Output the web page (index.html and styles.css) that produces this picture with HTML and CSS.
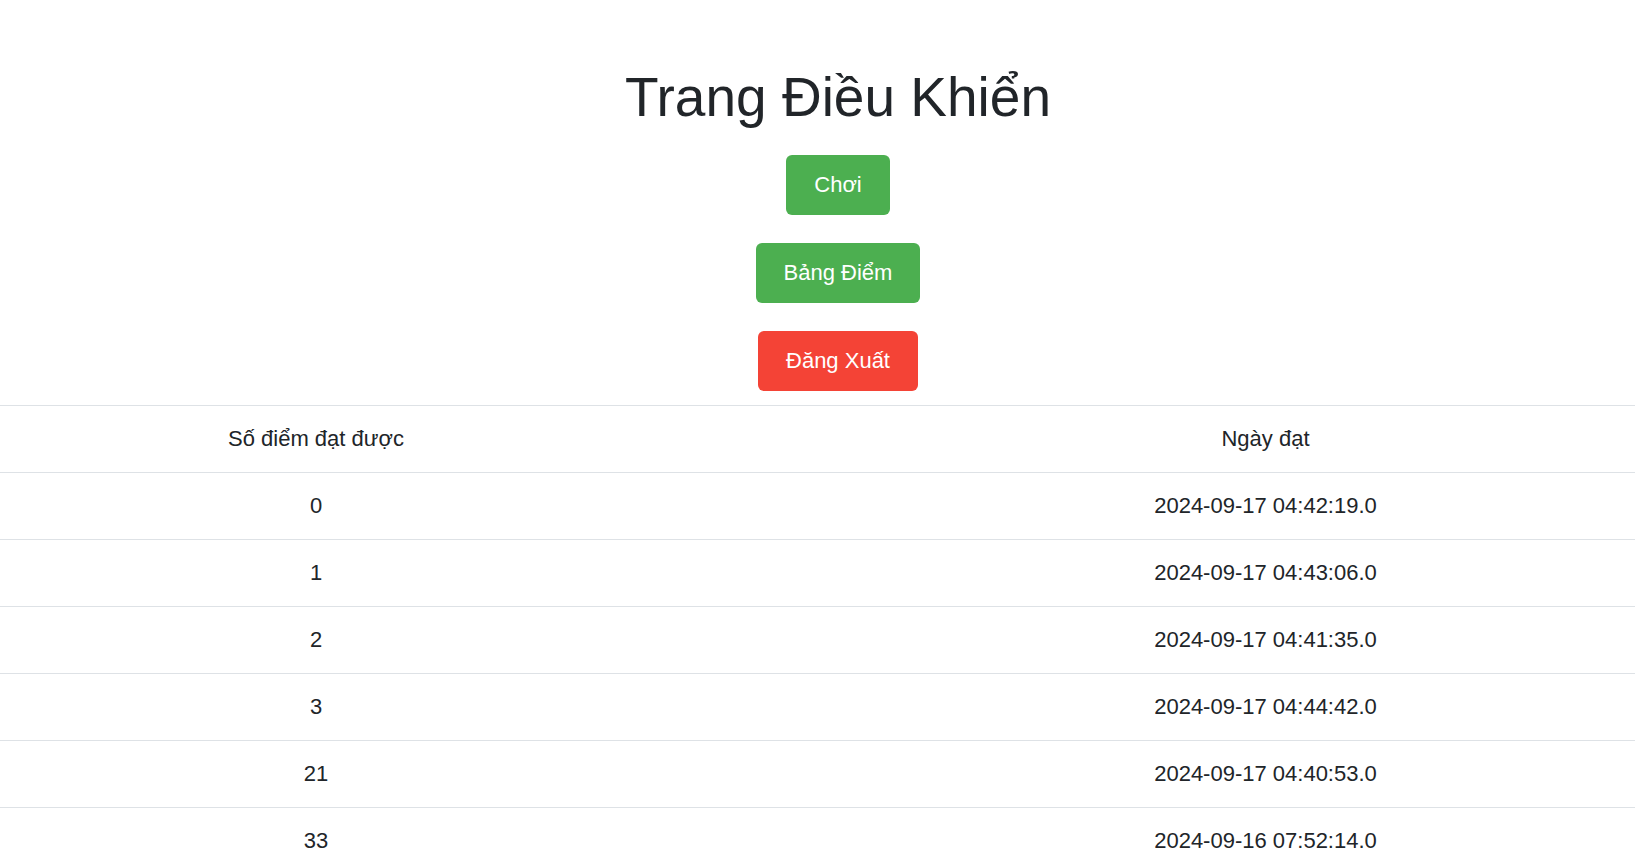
FILE: index.html
```html
<!DOCTYPE html>
<html lang="vi">
<head>
<meta charset="utf-8">
<title>Trang Điều Khiển</title>
<link rel="stylesheet" href="styles.css">
</head>
<body>
<div class="page">
  <header class="panel">
    <h1 class="title">Trang Điều Khiển</h1>
    <div class="actions">
      <a class="btn btn-green" href="#">Chơi</a>
      <a class="btn btn-green" href="#">Bảng Điểm</a>
      <a class="btn btn-red" href="#">Đăng Xuất</a>
    </div>
  </header>
  <table class="scores">
    <colgroup>
      <col class="col-score">
      <col class="col-date">
    </colgroup>
    <thead>
      <tr><th>Số điểm đạt được</th><th>Ngày đạt</th></tr>
    </thead>
    <tbody>
      <tr><td>0</td><td>2024-09-17 04:42:19.0</td></tr>
      <tr><td>1</td><td>2024-09-17 04:43:06.0</td></tr>
      <tr><td>2</td><td>2024-09-17 04:41:35.0</td></tr>
      <tr><td>3</td><td>2024-09-17 04:44:42.0</td></tr>
      <tr><td>21</td><td>2024-09-17 04:40:53.0</td></tr>
      <tr><td>33</td><td>2024-09-16 07:52:14.0</td></tr>
    </tbody>
  </table>
</div>
</body>
</html>
```

FILE: styles.css
```css
html, body {
  margin: 0;
  padding: 0;
  background: #ffffff;
}

body {
  font-family: "Liberation Sans", Arial, sans-serif;
  color: #212529;
  overflow: hidden;
}

.page {
  width: 1635px;
  height: 867px;
  overflow: hidden;
}

.panel {
  width: 1676px;
  display: flex;
  flex-direction: column;
  align-items: center;
  padding-top: 65px;
}

.title {
  margin: 0;
  font-size: 55px;
  line-height: 64.8px;
  font-weight: 400;
  color: #212529;
}

.actions {
  display: flex;
  flex-direction: column;
  align-items: center;
  gap: 28px;
  margin-top: 25px;
}

.btn {
  display: inline-block;
  font-size: 22px;
  line-height: 33px;
  padding: 13.5px 28px;
  color: #ffffff;
  text-decoration: none;
  border-radius: 6px;
}

.btn-green {
  background: #4caf50;
}

.btn-red {
  background: #f44336;
}

.scores {
  margin-top: 14px;
  width: 1899px;
  table-layout: fixed;
  border-collapse: collapse;
  font-size: 22px;
  line-height: 33px;
  color: #212529;
}

.col-score {
  width: 632px;
}

.col-date {
  width: 1267px;
}

.scores th,
.scores td {
  padding: 16.5px 0;
  text-align: center;
  font-weight: 400;
  border-top: 1px solid #dee2e6;
}
```
